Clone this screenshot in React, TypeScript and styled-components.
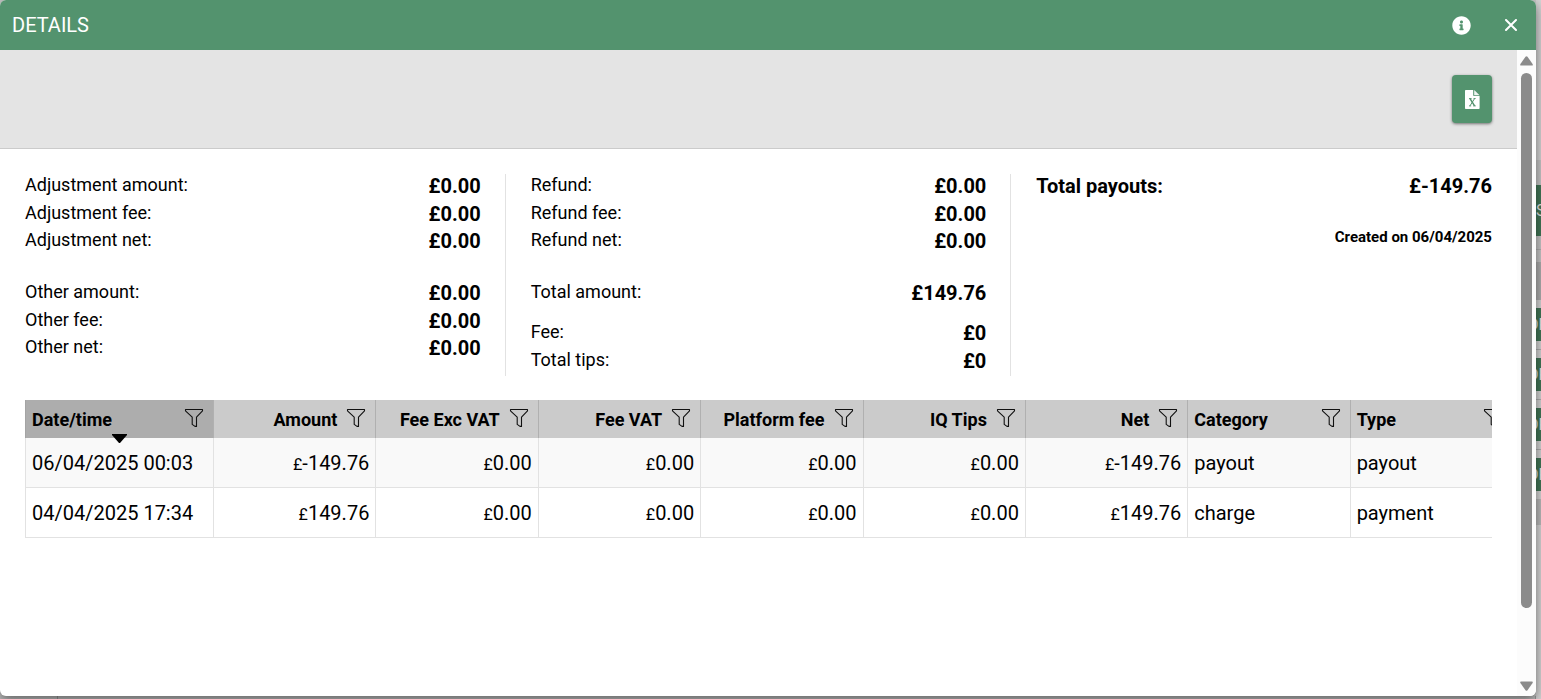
import React from "react";
import styled, { createGlobalStyle } from "styled-components";
import { FaInfoCircle } from "react-icons/fa";

const GlobalStyle = createGlobalStyle`
  *, *::before, *::after { box-sizing: border-box; }
  body {
    margin: 0;
    background: #c6c6c6;
    color: #000;
    font-family: Roboto, "Liberation Sans", sans-serif;
  }
  button { font: inherit; border: 0; padding: 0; cursor: pointer; }
`;

const Page = styled.div`
  display: grid;
  grid-template-columns: minmax(0, 1fr) 5px;
  grid-template-rows: minmax(0, 1fr) 3px;
  height: 100vh;
  overflow: hidden;
`;

const Dialog = styled.section`
  z-index: 1;
  display: flex;
  flex-direction: column;
  min-height: 0;
  overflow: hidden;
  background: #fff;
  border-radius: 6px;
  box-shadow: 0 4px 12px rgba(0, 0, 0, 0.5);
`;

const TitleBar = styled.header`
  display: flex;
  flex: none;
  align-items: center;
  height: 50px;
  padding: 0 12px;
  background: #53936e;
  color: #fff;
`;

const Title = styled.h1`
  flex: 1;
  margin: 0;
  font-size: 20px;
  font-weight: 400;
  line-height: 24px;
`;

const TitleButtons = styled.div`
  display: flex;
  gap: 24px;
`;

const TitleButton = styled.button`
  display: grid;
  place-items: center;
  width: 26px;
  height: 26px;
  background: none;
  color: #fff;
`;

const DialogBody = styled.div`
  display: flex;
  flex: 1;
  min-height: 0;
`;

const Content = styled.div`
  flex: 1;
  min-width: 0;
  overflow: hidden;
`;

const Toolbar = styled.div`
  display: flex;
  justify-content: flex-end;
  padding: 25px;
  background: #e4e4e4;
  border-bottom: 1px solid #cbcbcb;
`;

const ExportButton = styled.button`
  display: grid;
  place-items: center;
  width: 40px;
  height: 48px;
  background: #53936e;
  border-radius: 4px;
  box-shadow: 0 1px 3px rgba(0, 0, 0, 0.5);
`;

const Summary = styled.div`
  display: grid;
  grid-template-columns: repeat(3, minmax(0, 1fr));
  padding: 25px 0 24px;
`;

const SummaryColumn = styled.div`
  padding: 0 24px 0 25px;
  border-right: 1px solid #e2e2e2;

  &:last-child {
    padding-right: 25px;
    border-right: 0;
  }
`;

const groupHeights: Record<number, number> = { 1: 28, 2: 55, 3: 83 };

const Group = styled.dl<{ $rows: number; $gap?: number }>`
  display: grid;
  grid-auto-rows: 1fr;
  height: ${(p) => groupHeights[p.$rows]}px;
  margin: 0 0 ${(p) => p.$gap ?? 0}px;
`;

const Entry = styled.div`
  display: flex;
  justify-content: space-between;
`;

const Label = styled.dt<{ $strong?: boolean }>`
  font-size: ${(p) => (p.$strong ? 20 : 18)}px;
  font-weight: ${(p) => (p.$strong ? 700 : 400)};
  line-height: ${(p) => (p.$strong ? 24 : 22)}px;
`;

const Value = styled.dd`
  margin: 0;
  font-size: 20px;
  font-weight: 700;
  line-height: 24px;
`;

const CreatedOn = styled.p`
  margin: 24px 0 0;
  font-size: 15px;
  font-weight: 700;
  line-height: 22px;
  text-align: right;
`;

const GridFrame = styled.div`
  margin: 0 25px;
  overflow: hidden;
`;

const Grid = styled.table`
  width: 1488px;
  table-layout: fixed;
  border-spacing: 0;
`;

const HeadCell = styled.th<{ $sorted?: boolean }>`
  position: relative;
  width: ${(p) => (p.$sorted ? "189px" : "auto")};
  height: 38px;
  padding: 2px 9px 0 6px;
  background: ${(p) => (p.$sorted ? "#adadad" : "#cbcbcb")};
  border-right: 1px solid #b0b0b0;
  font-size: 18px;
  font-weight: 700;
  line-height: 24px;

  &:first-child { border-left: 1px solid #a4a4a4; }
`;

const HeadContent = styled.div<{ $numeric?: boolean }>`
  display: flex;
  align-items: flex-start;
  justify-content: ${(p) => (p.$numeric ? "flex-end" : "space-between")};
  gap: 9px;
`;

const FilterButton = styled.button`
  display: block;
  height: 20px;
  background: none;
`;

const SortMark = styled.svg`
  position: absolute;
  left: 50%;
  bottom: -5px;
  width: 15px;
  height: 9px;
  margin-left: -8px;
  z-index: 1;
`;

const Row = styled.tr`
  background: #fff;
  &:nth-child(odd) { background: #f9f9f9; }
`;

const Cell = styled.td<{ $numeric?: boolean }>`
  height: 50px;
  padding: 0 6px;
  border-right: 1px solid #e2e2e2;
  border-bottom: 1px solid #e2e2e2;
  font-size: 20px;
  line-height: 24px;
  text-align: ${(p) => (p.$numeric ? "right" : "left")};
  white-space: nowrap;

  &:first-child { border-left: 1px solid #e2e2e2; }
`;

const Currency = styled.span`
  font-size: 16px;
  line-height: 16px;
`;

const ScrollBar = styled.div`
  display: flex;
  flex: none;
  flex-direction: column;
  align-items: center;
  width: 19px;
  padding: 6px 0 5px;
  background: #fcfcfc;
`;

const ScrollArrow = styled.svg`
  flex: none;
  display: block;
  width: 13px;
  height: 10px;
`;

const ScrollTrack = styled.div`
  display: flex;
  flex: 1;
  flex-direction: column;
  width: 11px;
  padding: 7px 0;
`;

const ScrollThumb = styled.div`
  height: 89%;
  background: #8b8b8b;
  border-radius: 6px;
`;

const Behind = styled.div`
  display: flex;
  flex-direction: column;
  grid-row: span 2;
  overflow: hidden;
`;

const BehindBand = styled.div<{ $height: number; $tone?: string; $line?: boolean }>`
  flex: none;
  height: ${(p) => p.$height}px;
  background: ${(p) => p.$tone ?? "#c6c6c6"};
  border-bottom: ${(p) => (p.$line ? "1px solid #b0b0b0" : "0")};
`;

const BehindButton = styled.div<{ $height: number; $indent?: number }>`
  flex: none;
  height: ${(p) => p.$height}px;
  overflow: hidden;
  background: #427657;
  color: #e4e4e4;
  font-size: 16px;
  line-height: ${(p) => p.$height}px;
  text-indent: ${(p) => p.$indent ?? 0}px;
  white-space: nowrap;
`;

const BehindFoot = styled.div`
  display: flex;
`;

const BehindFootCell = styled.div<{ $width?: number }>`
  flex: ${(p) => (p.$width ? `0 0 ${p.$width}px` : "1")};
  background: #c0c0c0;
  border-right: 1px solid #999;
`;

function FilterIcon() {
  return (
    <svg width="20" height="20" viewBox="0 0 20 20" fill="none" stroke="#111" strokeWidth="1.1" strokeLinejoin="round">
      <path d="M1.5 1.5H18.5V2.8L12.5 9.2V18.4H11L8.2 16.4V9.2L1.5 2.8Z" />
    </svg>
  );
}

function ExcelIcon() {
  return (
    <svg width="15" height="19" viewBox="0 0 15 19">
      <path fill="#fff" d="M.8 0H8.2V5.2Q8.2 6 9 6H14.6V18.2Q14.6 19 13.8 19H.8Q0 19 0 18.2V.8Q0 0 .8 0Z" />
      <path fill="#fff" d="M9.2 0 14.6 5.2H9.2Z" opacity=".9" />
      <path fill="none" stroke="#53936e" strokeWidth="1.5" d="M5 8.6 9.6 15.8" />
      <path fill="none" stroke="#53936e" strokeWidth="1" d="M9.6 8.6 5 15.8" />
      <path fill="none" stroke="#53936e" strokeWidth=".9" d="M4 8.5H6.6M8.5 8.5H10.6M4 15.9H6.2M8.2 15.9H10.8" />
    </svg>
  );
}

function CloseIcon() {
  return (
    <svg width="12" height="12" viewBox="0 0 12 12" fill="none" stroke="#fff" strokeWidth="2" strokeLinecap="round">
      <path d="M1 1 11 11M11 1 1 11" />
    </svg>
  );
}

type Item = [string, string];

function Entries({ items, gap }: { items: Item[]; gap?: number }) {
  return (
    <Group $rows={items.length} $gap={gap}>
      {items.map(([label, value]) => (
        <Entry key={label}>
          <Label>{label}</Label>
          <Value>{value}</Value>
        </Entry>
      ))}
    </Group>
  );
}

type Column = { title: string; numeric?: boolean; sorted?: boolean };

const columns: Column[] = [
  { title: "Date/time", sorted: true },
  { title: "Amount", numeric: true },
  { title: "Fee Exc VAT", numeric: true },
  { title: "Fee VAT", numeric: true },
  { title: "Platform fee", numeric: true },
  { title: "IQ Tips", numeric: true },
  { title: "Net", numeric: true },
  { title: "Category" },
  { title: "Type" },
];

const rows = [
  ["06/04/2025 00:03", "-149.76", "0.00", "0.00", "0.00", "0.00", "-149.76", "payout", "payout"],
  ["04/04/2025 17:34", "149.76", "0.00", "0.00", "0.00", "0.00", "149.76", "charge", "payment"],
];

export default function App() {
  return (
    <>
      <GlobalStyle />
      <Page>
        <Dialog role="dialog" aria-labelledby="dialog-title">
          <TitleBar>
            <Title id="dialog-title">DETAILS</Title>
            <TitleButtons>
              <TitleButton aria-label="Information">
                <FaInfoCircle size={19} />
              </TitleButton>
              <TitleButton aria-label="Close">
                <CloseIcon />
              </TitleButton>
            </TitleButtons>
          </TitleBar>
          <DialogBody>
            <Content>
              <Toolbar>
                <ExportButton aria-label="Export to Excel">
                  <ExcelIcon />
                </ExportButton>
              </Toolbar>
              <Summary>
                <SummaryColumn>
                  <Entries
                    gap={24}
                    items={[
                      ["Adjustment amount:", "£0.00"],
                      ["Adjustment fee:", "£0.00"],
                      ["Adjustment net:", "£0.00"],
                    ]}
                  />
                  <Entries
                    items={[
                      ["Other amount:", "£0.00"],
                      ["Other fee:", "£0.00"],
                      ["Other net:", "£0.00"],
                    ]}
                  />
                </SummaryColumn>
                <SummaryColumn>
                  <Entries
                    gap={24}
                    items={[
                      ["Refund:", "£0.00"],
                      ["Refund fee:", "£0.00"],
                      ["Refund net:", "£0.00"],
                    ]}
                  />
                  <Entries gap={12} items={[["Total amount:", "£149.76"]]} />
                  <Entries
                    items={[
                      ["Fee:", "£0"],
                      ["Total tips:", "£0"],
                    ]}
                  />
                </SummaryColumn>
                <SummaryColumn>
                  <Group $rows={1}>
                    <Entry>
                      <Label $strong>Total payouts:</Label>
                      <Value>£-149.76</Value>
                    </Entry>
                  </Group>
                  <CreatedOn>Created on 06/04/2025</CreatedOn>
                </SummaryColumn>
              </Summary>
              <GridFrame>
                <Grid>
                  <thead>
                    <tr>
                      {columns.map((c) => (
                        <HeadCell key={c.title} scope="col" $sorted={c.sorted}>
                          <HeadContent $numeric={c.numeric}>
                            <span>{c.title}</span>
                            <FilterButton aria-label={`Filter ${c.title}`}>
                              <FilterIcon />
                            </FilterButton>
                          </HeadContent>
                          {c.sorted && (
                            <SortMark viewBox="0 0 15 9">
                              <path d="M0 0H15V1L8 9H7L0 1Z" />
                            </SortMark>
                          )}
                        </HeadCell>
                      ))}
                    </tr>
                  </thead>
                  <tbody>
                    {rows.map((row) => (
                      <Row key={row[0]}>
                        {row.map((text, i) => (
                          <Cell key={columns[i].title} $numeric={columns[i].numeric}>
                            {columns[i].numeric && <Currency>£</Currency>}
                            {text}
                          </Cell>
                        ))}
                      </Row>
                    ))}
                  </tbody>
                </Grid>
              </GridFrame>
            </Content>
            <ScrollBar aria-hidden="true">
              <ScrollArrow viewBox="0 0 13 10">
                <path fill="#8b8b8b" d="M5.5.8Q6.5-.4 7.5.8L12.6 8Q13.2 9.6 12 9.6H1Q-.2 9.6.4 8Z" />
              </ScrollArrow>
              <ScrollTrack>
                <ScrollThumb />
              </ScrollTrack>
              <ScrollArrow viewBox="0 0 13 10">
                <path fill="#8b8b8b" d="M5.5 9.2Q6.5 10.4 7.5 9.2L12.6 2Q13.2.4 12 .4H1Q-.2.4.4 2Z" />
              </ScrollArrow>
            </ScrollBar>
          </DialogBody>
        </Dialog>
        <Behind aria-hidden="true">
          <BehindBand $height={160} $tone="#d4d4d4" />
          <BehindBand $height={25} />
          <BehindButton $height={51}>S</BehindButton>
          <BehindBand $height={14} $line />
          <BehindBand $height={12} />
          <BehindBand $height={38} $tone="#adadad" />
          <BehindBand $height={8} $tone="#d4d4d4" />
          {[0, 1, 2].map((n) => (
            <React.Fragment key={n}>
              <BehindButton $height={33} $indent={-8}>DF</BehindButton>
              <BehindBand $height={9} $tone="#d4d4d4" $line />
              <BehindBand $height={8} $tone="#d4d4d4" />
            </React.Fragment>
          ))}
          <BehindButton $height={33} $indent={-8}>DF</BehindButton>
          <BehindBand $height={8} $tone="#d4d4d4" />
          <BehindBand $height={26} $tone="#bababa" />
          <BehindBand $height={174} $tone="#d4d4d4" />
        </Behind>
        <BehindFoot aria-hidden="true">
          <BehindFootCell $width={58} />
          <BehindFootCell />
        </BehindFoot>
      </Page>
    </>
  );
}
